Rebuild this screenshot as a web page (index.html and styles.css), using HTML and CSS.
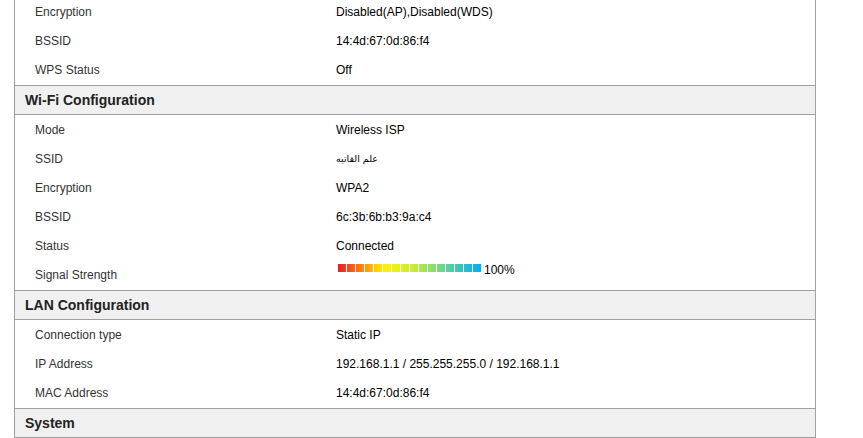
FILE: index.html
```html
<!DOCTYPE html>
<html>
	<head>
		<title>Status</title>
		<meta http-equiv="Content-Type" content="text/html; charset=UTF-8">
		<link rel="stylesheet" href="styles.css">
	</head>
	<body>
		<div class="panel">
			<div class="rows">
				<div class="row"><span class="label">Encryption</span><span class="value">Disabled(AP),Disabled(WDS)</span></div>
				<div class="row"><span class="label">BSSID</span><span class="value">14:4d:67:0d:86:f4</span></div>
				<div class="row"><span class="label">WPS Status</span><span class="value">Off</span></div>
			</div>

			<div class="section-title">Wi-Fi Configuration</div>
			<div class="rows">
				<div class="row"><span class="label">Mode</span><span class="value">Wireless ISP</span></div>
				<div class="row"><span class="label">SSID</span><span class="value arabic" dir="rtl">علم القاتيه</span></div>
				<div class="row"><span class="label">Encryption</span><span class="value">WPA2</span></div>
				<div class="row"><span class="label">BSSID</span><span class="value">6c:3b:6b:b3:9a:c4</span></div>
				<div class="row"><span class="label">Status</span><span class="value">Connected</span></div>
				<div class="row"><span class="label">Signal Strength</span><span class="value signal"><span class="bar"></span>100%</span></div>
			</div>

			<div class="section-title">LAN Configuration</div>
			<div class="rows">
				<div class="row"><span class="label">Connection type</span><span class="value">Static IP</span></div>
				<div class="row"><span class="label">IP Address</span><span class="value">192.168.1.1 / 255.255.255.0 / 192.168.1.1</span></div>
				<div class="row"><span class="label">MAC Address</span><span class="value">14:4d:67:0d:86:f4</span></div>
			</div>

			<div class="section-title">System</div>
		</div>
	</body>
</html>
```

FILE: styles.css
```css
html, body {
	margin: 0;
	padding: 0;
	overflow: hidden;
	background: #fff;
}

body {
	font-family: "Liberation Sans", Arial, sans-serif;
	font-size: 12px;
	color: #000;
}

/* page is scrolled a little, first row is cut at the top */
.panel {
	margin: -3px 0 0 14px;
	width: 800px;
	border-left: 1px solid #a0a0a0;
	border-right: 1px solid #a0a0a0;
}

.section-title {
	height: 28px;
	line-height: 28px;
	padding-left: 10px;
	background-color: #f0f0f0;
	border-top: 1px solid #a0a0a0;
	border-bottom: 1px solid #a0a0a0;
	font-size: 14px;
	font-weight: bold;
	color: #222;
}

.rows {
	padding-bottom: 1px;
}

.row {
	display: grid;
	grid-template-columns: 301px 1fr;
	align-items: center;
	height: 29px;
	padding-left: 20px;
}

.label {
	color: #333;
}

.value {
	color: #000;
}

.arabic {
	justify-self: start;
	font-family: "DejaVu Sans", sans-serif;
	font-size: 9.5px;
}

.signal {
	align-self: start;
	display: flex;
	align-items: center;
	padding: 3px 0 0 2px;
	line-height: 14px;
}

.bar {
	display: inline-block;
	width: 143px;
	height: 8px;
	margin: 0 3px 4px 0;
	background:
		repeating-linear-gradient(to right, transparent 0 8px, #fff 8px 9px),
		linear-gradient(to right, #ed1c24 0%, #fb5a16 10%, #ff8a0e 18%, #ffd200 27%, #fff200 33%, #e6f21e 42%, #c8ee34 52%, #98e262 63%, #62d496 75%, #2ec2c4 87%, #00aeef 100%);
}
```
